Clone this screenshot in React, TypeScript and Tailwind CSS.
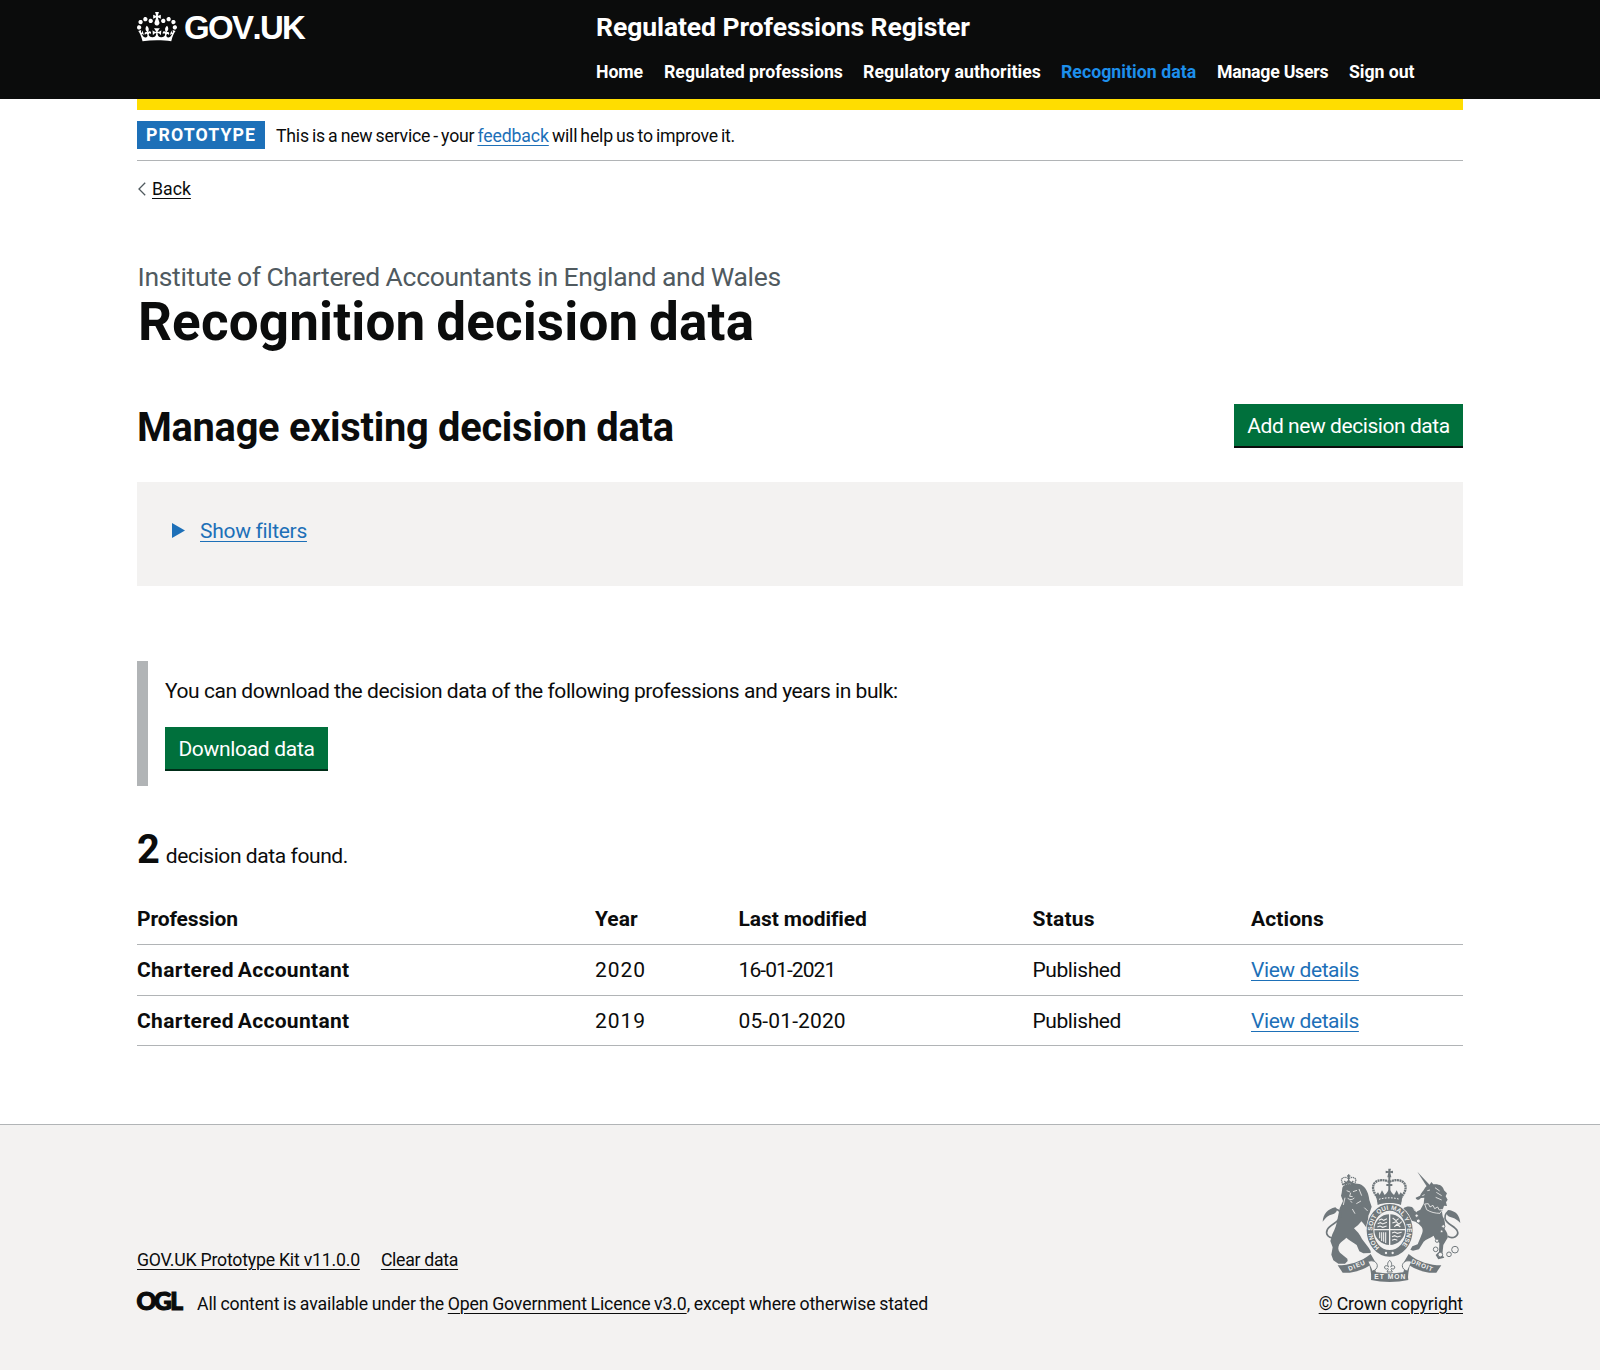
import React from 'react';

const INK = '#6f777b';
const PAPER = '#f3f2f1';

function CrownLogo() {
  return (
    <svg viewBox="0 0 132 97" className="mt-[1px] h-[29.5px] w-[40px] fill-white" preserveAspectRatio="none" aria-hidden="true">
      <path d="M25 30.2c3.5 1.5 7.7-.2 9.1-3.7 1.5-3.6-.2-7.8-3.9-9.2-3.6-1.4-7.6.3-9.1 3.9-1.4 3.5.3 7.5 3.9 9zM9 39.5c3.6 1.5 7.8-.2 9.2-3.7 1.5-3.6-.2-7.8-3.9-9.1-3.6-1.5-7.6.2-9.1 3.8-1.4 3.5.3 7.5 3.8 9zM4.4 57.2c3.5 1.5 7.7-.2 9.1-3.8 1.5-3.6-.2-7.7-3.9-9.1-3.5-1.5-7.6.3-9.1 3.8-1.4 3.5.3 7.6 3.9 9.1zm38.3-21.4c3.5 1.5 7.7-.2 9.1-3.8 1.5-3.6-.2-7.7-3.9-9.1-3.6-1.5-7.6.3-9.1 3.8-1.3 3.6.4 7.7 3.9 9.1zm64.4-5.6c-3.6 1.5-7.8-.2-9.1-3.7-1.5-3.6.2-7.8 3.8-9.2 3.6-1.4 7.7.3 9.2 3.9 1.3 3.5-.4 7.5-3.9 9zm15.9 9.3c-3.6 1.5-7.7-.2-9.1-3.7-1.5-3.6.2-7.8 3.7-9.1 3.6-1.5 7.7.2 9.2 3.8 1.5 3.5-.3 7.5-3.8 9zm4.7 17.7c-3.6 1.5-7.8-.2-9.2-3.8-1.5-3.6.2-7.7 3.9-9.1 3.6-1.5 7.7.3 9.2 3.8 1.3 3.5-.4 7.6-3.9 9.1zM89.3 35.8c-3.6 1.5-7.8-.2-9.2-3.8-1.4-3.6.2-7.7 3.9-9.1 3.6-1.5 7.7.3 9.2 3.8 1.4 3.6-.3 7.7-3.9 9.1zM69.7 17.7l8.9 4.7V9.3l-8.9 2.8c-.2-.3-.5-.6-.9-.9L72.4 0H59.6l3.5 11.2c-.3.3-.6.5-.9.9l-8.8-2.8v13.1l8.8-4.7c.3.3.6.7.9.9l-5 15.4v.1c-.2.8-.4 1.6-.4 2.4 0 4.1 3.1 7.5 7 8.1h.2c.3 0 .7.1 1 .1.4 0 .7 0 1-.1h.2c4-.6 7.1-4.1 7.1-8.1 0-.8-.1-1.7-.4-2.4V34l-5.1-15.4c.4-.2.7-.6 1-.9zM66 92.8c16.9 0 32.8 1.1 47.1 3.2 4-16.9 8.9-26.7 14-33.5l-9.6-3.4c1 4.9 1.1 7.2 0 10.2-1.5-1.4-3-4.3-4.2-8.7L108.6 76c2.8-2 5-3.2 7.5-3.3-4.4 9.4-10 11.9-13.6 11.2-4.3-.8-6.3-4.6-5.6-7.9 1-4.7 5.7-5.9 8-.5 4.3-8.7-3-11.4-7.6-8.8 7.1-7.2 7.9-13.5 2.1-21.1-8 6.1-8.1 12.3-4.5 20.8-4.7-5.4-12.1-2.5-9.5 6.2 3.4-5.2 7.9-2 7.2 3.1-.6 4.3-6.4 7.8-13.5 7.2-10.3-.9-10.9-8-11.2-13.8 2.5-.5 7.1 1.8 11 7.3L80.2 60c-4.1 4.4-8 5.3-12.3 5.4 1.4-4.4 8-11.6 8-11.6H55.5s6.4 7.2 7.9 11.6c-4.2-.1-8-1-12.3-5.4l1.4 16.4c3.9-5.5 8.5-7.7 10.9-7.3-.3 5.8-.9 12.8-11.1 13.8-7.2.6-12.9-2.9-13.5-7.2-.7-5 3.8-8.3 7.1-3.1 2.7-8.7-4.6-11.6-9.4-6.2 3.7-8.5 3.6-14.7-4.6-20.8-5.8 7.6-5 13.9 2.2 21.1-4.7-2.6-11.9.1-7.7 8.8 2.3-5.5 7.1-4.2 8.1.5.7 3.3-1.3 7.1-5.7 7.9-3.5.7-9-1.8-13.5-11.2 2.5.1 4.7 1.3 7.5 3.3l-4.7-15.4c-1.2 4.4-2.7 7.2-4.3 8.7-1.1-3-.9-5.3 0-10.2l-9.5 3.4c5 6.9 9.9 16.7 14 33.5 14.8-2.1 30.8-3.2 47.7-3.2z" />
    </svg>
  );
}

/* Royal coat of arms: lion, crowned garter shield, unicorn and motto ribbon. */
function Crest() {
  return (
    <svg viewBox="60 50 425 350" className="h-[116.67px] w-[141.67px]" fill={INK} aria-hidden="true">
      {/* lion */}
      <path d="M124 112c2-8 14-12 24-10 12-4 28-3 38 5 12 10 17 26 19 42l7 20-6 18c-6 10-6 18 0 28l9 14-3 14-11-6c-8-8-13-18-20-24-6 9-14 16-22 21 8 8 18 18 24 32l20 26 6 10v6l-22 1-12-6-8-19c-10-8-22-13-31-22-7 7-16 12-21 20-4 9-5 17 2 25l22 18 1 7-8 8h-20l-15-10-6-17 4-22-7-19 6-20c8-14 13-30 16-48l6-30 10-22-6-16 2-8z" />
      <path d="M98 262c-14 3-26-10-19-24 9-17 38-22 40-42 0-12-6-18-14-19" fill="none" stroke={INK} strokeWidth="5" />
      <path d="M65 214c1-22 15-38 38-43 9 6 4 18-8 21-14 3-20 10-30 22z" />
      <path d="M125 103l-4-16c6-8 16-7 22-2 6-5 16-6 22 2l-4 16z" fill="none" stroke={INK} strokeWidth="4" strokeDasharray="4 2" />
      <path d="M127 101c12-4 22-4 33-1M143 72v28M138 77h10M130 92l5 6 8-8 8 8 6-6" fill="none" stroke={INK} strokeWidth="4" />
      <path d="M137 121l10 4M156 124l12-4M149 127l-3 11 9 1M140 144c6 5 14 5 20-1M148 151l5 6M174 116l8 20M132 142l-5 22M166 160l14-8M154 176l8 14M190 172l10 10" fill="none" stroke={PAPER} strokeWidth="2.5" />

      {/* unicorn */}
      <path d="M349 64l38 41-8 6z" />
      <path d="M357 136c3-9 10-14 13-20 3-7 9-12 16-13l5-8 6 7c16-2 30 4 32 18l9 9-4 9 6 10-5 8 3 11-9-1-6 18 2 14c8 12 8 26 6 38 7 10 10 16 9 26l-13 22-3 30 6 8-18 5-8-13 10-10 1-26c-8-8-14-12-17-22-12 8-22 10-30 18l-14 23-18 4-8-3 6-10 16-6 10-24c4-10 8-18 2-28l-14-14-20-6-8-22c-7-2-11-8-13-14 8-6 18-7 26-4l13 14 12-6 10-18 2-18-10 1-6 5c-5 1-9-1-10-6z" />
      <path d="M440 258c16 10 35-2 29-16-6-15-34-20-37-38-1-13 6-21 16-21" fill="none" stroke={INK} strokeWidth="5" />
      <path d="M478 218c-2-22-12-36-36-39-9 5-6 18 6 21 14 3 20 8 30 18z" />
      <path d="M371 161l6 17c12 8 26 11 40 11l8-12-10 2-5-9-9 5-5-10-9 5-5-10z" stroke={PAPER} strokeWidth="2.5" />
      <path d="M379 121l8-2M364 136l7-3M402 112l14 10M406 126l16 10M404 141l18 8M338 178l10 7M348 262l-10 20" fill="none" stroke={PAPER} strokeWidth="2.5" />
      <g fill={PAPER} stroke={INK} strokeWidth="3">
        <circle cx="347" cy="196" r="5" />
        <circle cx="352" cy="212" r="6" />
        <circle cx="427" cy="228" r="5" />
        <circle cx="422" cy="243" r="4" />
        <circle cx="408" cy="271" r="5" />
        <circle cx="404" cy="297" r="7" />
        <circle cx="418" cy="313" r="7" />
        <circle cx="444" cy="312" r="7" />
        <circle cx="462" cy="298" r="10" />
      </g>

      {/* crown */}
      <path d="M262 55h8l-2 8 8-2v8l-8-2 3 14h-12l3-14-8 2v-8l8 2z" />
      <path d="M231 142c-12-12-20-30-11-43 9-12 32-12 45-4 13-8 36-8 45 4 9 13 1 31-11 43" fill="none" stroke={INK} strokeWidth="7" strokeDasharray="6 1.5" />
      <path d="M265 80v44M256 104h18" stroke={INK} strokeWidth="6" />
      <path d="M224 134l7-8 5 8 7-14 8 14 6-6 8-12 8 12 6 6 8-14 7 14 5-8 7 8-5 20H229z" />
      <path d="M228 150c20-7 54-7 74 0l-2 14c-20-8-50-8-70 0z" />
      <path d="M234 147c20-6 44-6 62 0" stroke={PAPER} strokeWidth="3" fill="none" strokeDasharray="5 4" />

      {/* garter */}
      <ellipse cx="266" cy="240" rx="71" ry="81" fill={PAPER} />
      <ellipse cx="266" cy="240" rx="59" ry="69" fill="none" stroke={INK} strokeWidth="20" />
      <path id="garter" d="M236 291 A52 62 0 0 1 214 240 A52 62 0 0 1 318 240 A52 62 0 0 1 296 291" fill="none" />
      <text fill={PAPER} fontSize="19" fontWeight="700" fontFamily="Liberation Sans, sans-serif">
        <textPath href="#garter" textLength="284" lengthAdjust="spacing">HONI SOIT QUI MAL Y PENSE</textPath>
      </text>
      <circle cx="255" cy="308" r="3.5" fill={PAPER} />
      <circle cx="275" cy="308" r="3.5" fill={PAPER} />

      {/* quartered shield */}
      <circle cx="266" cy="238" r="46" fill={INK} />
      <path d="M266 191v94M219 238h94" stroke={PAPER} strokeWidth="4" />
      <g fill="none" stroke={PAPER} strokeWidth="3.2">
        <path d="M234 210l8-4 6 4 10-5M230 220l8-3 7 4 13-5M229 230l8-3 8 4 12-4" />
        <path d="M273 248l8-3 8 4 13-3M273 259l8-3 8 4 10-3M273 270l8-3 8 3" />
        <path d="M275 203l10 8 8-6M274 218l12-4 8 8 8-8M280 230l8-8 10 8" />
        <path d="M236 246v18M242 246v26M248 246v28M254 246v32" />
      </g>

      {/* ribbon */}
      <path d="M110 345c34 0 70-10 99-34l14 24c-26 18-62 36-98 32z" />
      <path d="M205 344l12-6 8 28-14 20c0-12-2-28-6-42z" />
      <path d="M421 345c-34 0-69-10-98-34l-14 24c26 18 61 36 97 32z" />
      <path d="M327 344l-12-6-8 28 14 20c0-12 2-28 6-42z" />
      <path d="M213 363c33 8 73 8 106 0l3 26c-35 8-77 8-112 0z" />
      <path d="M202 333c14-5 26 2 27 13 0 8-6 14-14 16M331 333c-14-5-26 2-27 13 0 8 6 14 14 16" fill={PAPER} stroke={INK} strokeWidth="3" />
      <g fill={PAPER} fontWeight="700" fontSize="20" fontFamily="Liberation Sans, sans-serif">
        <text transform="translate(145 362) rotate(-23)" fontSize="19" textLength="53" lengthAdjust="spacing">DIEU</text>
        <text x="220" y="387" textLength="93" lengthAdjust="spacing">ET MON</text>
        <text transform="translate(329 338) rotate(22)" fontSize="19" textLength="68" lengthAdjust="spacing">DROIT</text>
      </g>
      <path d="M266 330c8 8 7 14 3 20 6-7 14-4 12 3-2 5-8 4-9 1l-2 3 4 8h-16l4-8-2-3c-1 3-7 4-9-1-2-7 6-10 12-3-4-6-5-12 3-20z" fill={PAPER} stroke={INK} strokeWidth="3" />
    </svg>
  );
}

const nav = [
  { label: 'Home', cls: 'w-[48px] tracking-[-0.006em]' },
  { label: 'Regulated professions', cls: 'w-[179px] tracking-[0.001em]' },
  { label: 'Regulatory authorities', cls: 'w-[178px] tracking-[0.004em]' },
  { label: 'Recognition data', cls: 'w-[136px] tracking-[0.002em] text-[#1d8feb]' },
  { label: 'Manage Users', cls: 'w-[112px] tracking-[-0.014em]' },
  { label: 'Sign out', cls: 'w-[67px] tracking-[-0.003em]' },
];

const rows = [
  { name: 'Chartered Accountant', year: '2020', date: '16-01-2021', dateCls: 'tracking-[-0.044em]', status: 'Published' },
  { name: 'Chartered Accountant', year: '2019', date: '05-01-2020', dateCls: 'tracking-[0.006em]', status: 'Published' },
];

const ROW = 'grid grid-cols-[458px_143.5px_294px_218.5px_1fr] items-center border-b border-[#b1b4b6] h-[51px]';
const LINK = 'underline decoration-1 underline-offset-[3px]';

export default function App() {
  return (
    <div className="flex min-h-[1370px] w-[1600px] flex-col overflow-hidden bg-white font-['Roboto',sans-serif] text-[21px] leading-[28px] text-[#0b0c0c]">
      <header className="h-[99px] bg-[#0b0c0c] text-white">
        <div className="mx-auto flex w-[1326px]">
          <div className="flex w-[459px] gap-[7px] pt-[11px]">
            <CrownLogo />
            <span className="pt-[1px] font-['Liberation_Sans',sans-serif] text-[33px] leading-[32px] font-bold tracking-[-0.05em] [font-kerning:none]">
              GOV.UK
            </span>
          </div>
          <div className="pt-[12px]">
            <div className="text-[26.5px] leading-[30px] font-bold tracking-[-0.003em]">Regulated Professions Register</div>
            <nav className="mt-[19px] flex gap-[20px] text-[17.7px] leading-[22px] font-bold whitespace-nowrap">
              {nav.map((n) => (
                <a key={n.label} className={n.cls}>
                  {n.label}
                </a>
              ))}
            </nav>
          </div>
        </div>
      </header>

      <main className="mx-auto w-[1326px]">
        <div className="h-[11px] bg-[#ffdd00]" />
        <div className="flex h-[51px] items-start gap-[11px] border-b border-[#b1b4b6] pt-[11px] text-[17.7px]">
          <strong className="h-[28px] w-[128px] bg-[#1d70b8] pl-[9px] leading-[29px] tracking-[0.063em] text-white">PROTOTYPE</strong>
          <span className="leading-[30px] tracking-[-0.012em] [word-spacing:-0.06em]">
            This is a new service - your <a className={`${LINK} tracking-[-0.008em] text-[#1d70b8]`}>feedback</a> will help us to improve it.
          </span>
        </div>

        <a className="mt-[17px] flex items-center text-[17.7px] leading-[22px]">
          <svg viewBox="0 0 8 14" className="mr-[6px] ml-[1px] h-[14px] w-[8px]" fill="none" stroke="#505a5f" strokeWidth="1.3">
            <path d="M7.2 .8 1 7l6.2 6.2" />
          </svg>
          <span className={LINK}>Back</span>
        </a>

        <div className="mt-[62px] pl-[0.5px] text-[26.5px] leading-[30px] tracking-[-0.012em] text-[#505a5f] [word-spacing:-0.02em]">
          Institute of Chartered Accountants in England and Wales
        </div>
        <h1 className="mt-[2px] pl-[1px] text-[53px] leading-[56px] font-bold tracking-[0.003em] [word-spacing:-0.05em]">Recognition decision data</h1>

        <div className="mt-[54px] flex h-[44px] items-center justify-between">
          <h2 className="pt-[3px] text-[39.8px] leading-[44px] font-bold tracking-[-0.007em]">Manage existing decision data</h2>
          <button className="h-[44px] w-[229px] border-b-2 border-[#0b0c0c] bg-[#00703c] pt-[1px] tracking-[-0.021em] text-white">
            Add new decision data
          </button>
        </div>

        <section className="mt-[34px] flex h-[104px] items-start bg-[#f3f2f1] pt-[35px] pl-[35px] text-[#1d70b8]">
          <svg viewBox="0 0 13 15" className="mt-[6px] mr-[15px] h-[15px] w-[13px] fill-[#1d70b8]">
            <path d="M0 0l13 7.5L0 15z" />
          </svg>
          <span className={`${LINK} tracking-[-0.014em]`}>Show filters</span>
        </section>

        <section className="mt-[75px] h-[125px] border-l-[11px] border-[#b1b4b6] pt-[16px] pl-[17px]">
          <p className="tracking-[-0.0213em]">
            You can download the decision data of the following professions and years in bulk:
          </p>
          <button className="mt-[22px] h-[44px] w-[163px] border-b-2 border-[#002d18] bg-[#00703c] pt-[1px] tracking-[-0.015em] text-white">
            Download data
          </button>
        </section>

        <p className="mt-[44px] flex h-[40px] items-baseline gap-[6px] leading-[40px]">
          <span className="text-[39.8px] font-bold">2</span>
          <span className="tracking-[-0.02em]">decision data found.</span>
        </p>

        <div className="mt-[24px]">
          <div className={`${ROW} font-bold`}>
            <span className="tracking-[-0.006em]">Profession</span>
            <span>Year</span>
            <span className="tracking-[-0.004em]">Last modified</span>
            <span className="tracking-[0.01em]">Status</span>
            <span className="tracking-[0.005em]">Actions</span>
          </div>
          {rows.map((r) => (
            <div key={r.year} className={`${ROW} last:h-[50px]`}>
              <span className="font-bold tracking-[0.015em] [word-spacing:-0.08em]">{r.name}</span>
              <span className="tracking-[0.044em]">{r.year}</span>
              <span className={r.dateCls}>{r.date}</span>
              <span className="tracking-[-0.02em]">{r.status}</span>
              <span>
                <a className={`${LINK} tracking-[-0.02em] text-[#1d70b8]`}>View details</a>
              </span>
            </div>
          ))}
        </div>
      </main>

      <footer className="mt-[78px] flex-1 border-t border-[#b1b4b6] bg-[#f3f2f1] text-[17.7px] leading-[22px]">
        <div className="mx-auto flex w-[1326px] items-end justify-between pt-[42px]">
          <div>
            <div className="flex gap-[21px]">
              <a className={`${LINK} tracking-[-0.012em]`}>GOV.UK Prototype Kit v11.0.0</a>
              <a className={`${LINK} tracking-[-0.017em]`}>Clear data</a>
            </div>
            <div className="mt-[22px] flex">
              <svg viewBox="0 0 46 19" className="-mt-[1px] mr-[14px] h-[19px] w-[46px] overflow-visible">
                <text y="18" x="-.5 17 33.3" fontFamily="Lato, sans-serif" fontWeight="900" fontSize="24.5" fill="#0b0c0c" stroke="#0b0c0c" strokeWidth="1.2">
                  OGL
                </text>
              </svg>
              <span className="tracking-[-0.008em] [word-spacing:-0.03em]">
                All content is available under the <a className={LINK}>Open Government Licence v3.0</a>, except where otherwise stated
              </span>
            </div>
          </div>
          <div className="flex flex-col items-end">
            <Crest />
            <a className={`${LINK} mt-[9px] tracking-[-0.007em]`}>© Crown copyright</a>
          </div>
        </div>
      </footer>
    </div>
  );
}
